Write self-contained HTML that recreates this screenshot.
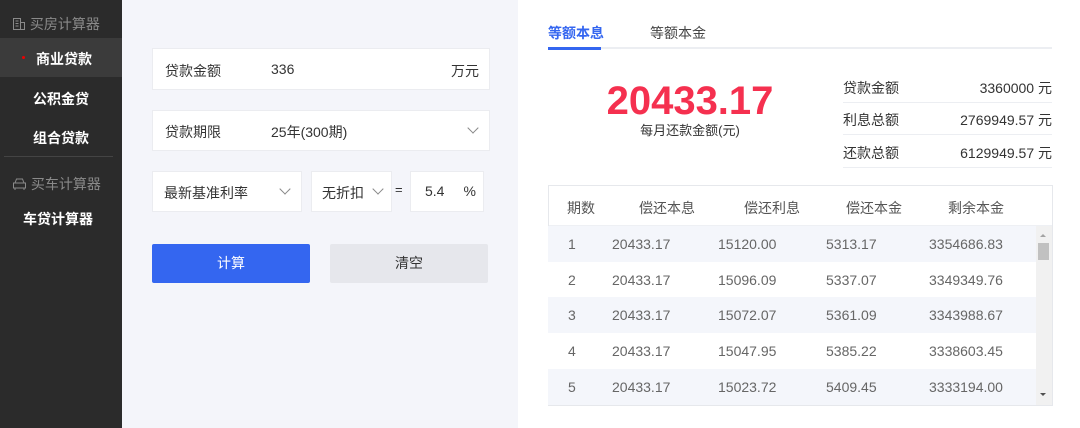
<!DOCTYPE html>
<html><head><meta charset="utf-8"><style>
*{margin:0;padding:0;box-sizing:border-box}
body{width:1080px;height:428px;overflow:hidden;position:relative;font-family:"Liberation Sans","Noto Sans CJK SC",sans-serif;background:#fff}
.a{position:absolute}
.sb{left:0;top:0;width:122px;height:428px;background:#2b2b2b}
.sb .t{position:absolute;width:122px;text-align:center;font-size:14px;color:#fff;font-weight:bold}
.sb .g{position:absolute;font-size:14px;color:#8a8a8a}
.lp{left:122px;top:0;width:396px;height:428px;background:#f4f5fa}
.box{position:absolute;background:#fff;border:1px solid #ebecf0;font-size:14px;color:#333}
.chev{position:absolute;width:8px;height:8px;border-right:1.3px solid #888;border-bottom:1.3px solid #888;transform:rotate(45deg)}
.txt{position:absolute;font-size:14px;color:#333;white-space:nowrap}
.row{position:absolute;left:548px;width:488px;height:36px;font-size:14px;color:#666}
.row span{position:absolute;top:10px}
</style></head><body>
<div class="a sb">
  <div class="g" style="left:12px;top:14px">
    <svg width="14" height="14" viewBox="0 0 14 14" style="vertical-align:-2px"><rect x="1.5" y="1.5" width="7" height="11" fill="none" stroke="#8a8a8a"/><rect x="8.5" y="5.5" width="4" height="7" fill="none" stroke="#8a8a8a"/><path d="M3.5 4h3M3.5 6.5h3M3.5 9h3" stroke="#8a8a8a"/></svg> 买房计算器</div>
  <div class="a" style="left:0;top:38px;width:122px;height:39px;background:#3b3b3b"></div>
  <div class="a" style="left:22px;top:56px;width:3px;height:3px;border-radius:50%;background:#e00"></div>
  <div class="t" style="top:49px;left:3px">商业贷款</div>
  <div class="t" style="top:89px">公积金贷</div>
  <div class="t" style="top:128px">组合贷款</div>
  <div class="a" style="left:4px;top:156px;width:109px;height:1px;background:#444"></div>
  <div class="g" style="left:12px;top:174px">
    <svg width="15" height="14" viewBox="0 0 15 14" style="vertical-align:-2px"><path d="M3 6 L4.5 2h6L12 6M1.5 6h12v5h-12zM3 11v2M12 11v2" fill="none" stroke="#8a8a8a"/></svg> 买车计算器</div>
  <div class="t" style="top:209px;left:-3px">车贷计算器</div>
</div>
<div class="a lp"></div>
<div class="box" style="left:152px;top:48px;width:338px;height:42px">
  <span class="txt" style="left:12px;top:12px">贷款金额</span><span class="txt" style="left:118px;top:12px">336</span><span class="txt" style="right:10px;top:12px">万元</span></div>
<div class="box" style="left:152px;top:110px;width:338px;height:41px">
  <span class="txt" style="left:12px;top:11px">贷款期限</span><span class="txt" style="left:118px;top:11px">25年(300期)</span><div class="chev" style="right:12px;top:13px"></div></div>
<div class="box" style="left:152px;top:171px;width:150px;height:41px">
  <span class="txt" style="left:11px;top:11px">最新基准利率</span><div class="chev" style="right:12px;top:13px"></div></div>
<div class="box" style="left:311px;top:171px;width:81px;height:41px">
  <span class="txt" style="left:10px;top:11px">无折扣</span><div class="chev" style="right:9px;top:13px"></div></div>
<span class="txt" style="left:395px;top:182px;font-size:13px">=</span>
<div class="box" style="left:410px;top:171px;width:74px;height:41px">
  <span class="txt" style="left:14px;top:11px">5.4</span><span class="txt" style="right:7px;top:11px">%</span></div>
<div class="a" style="left:152px;top:244px;width:158px;height:39px;background:#3466f0;border-radius:2px;color:#fff;font-size:14px;text-align:center;line-height:39px">计算</div>
<div class="a" style="left:330px;top:244px;width:158px;height:39px;background:#e6e7ec;border-radius:2px;color:#333;font-size:14px;text-align:center;line-height:39px">清空</div>

<span class="txt" style="left:548px;top:23px;color:#3466f0;font-weight:bold">等额本息</span>
<span class="txt" style="left:650px;top:23px;color:#444">等额本金</span>
<div class="a" style="left:548px;top:47px;width:504px;height:2px;background:#eceef2"></div>
<div class="a" style="left:548px;top:47px;width:53px;height:3px;background:#3466f0"></div>
<div class="a" style="left:590px;top:78px;width:200px;text-align:center;font-size:40px;font-weight:bold;color:#f5304f;line-height:46px">20433.17</div>
<div class="a" style="left:590px;top:120px;width:200px;text-align:center;font-size:13px;color:#333">每月还款金额(元)</div>

<span class="txt" style="left:843px;top:78px">贷款金额</span><span class="txt" style="right:28px;top:78px">3360000 元</span>
<div class="a" style="left:843px;top:102px;width:209px;height:1px;background:#eceef2"></div>
<span class="txt" style="left:843px;top:110px">利息总额</span><span class="txt" style="right:28px;top:110px">2769949.57 元</span>
<div class="a" style="left:843px;top:134px;width:209px;height:1px;background:#eceef2"></div>
<span class="txt" style="left:843px;top:143px">还款总额</span><span class="txt" style="right:28px;top:143px">6129949.57 元</span>
<div class="a" style="left:843px;top:167px;width:209px;height:1px;background:#eceef2"></div>

<div class="a" style="left:548px;top:185px;width:505px;height:221px;border:1px solid #e6e8ec"></div>
<div class="row" style="top:186px;height:39px;color:#555"><span style="left:19px;top:12px">期数</span><span style="left:91px;top:12px">偿还本息</span><span style="left:196px;top:12px">偿还利息</span><span style="left:298px;top:12px">偿还本金</span><span style="left:400px;top:12px">剩余本金</span></div>
<div class="a" style="left:549px;top:225px;width:503px;height:1px;background:#eef0f4"></div>
<div class="row" style="top:226px;background:#f4f6fb"><span style="left:20px">1</span><span style="left:64px">20433.17</span><span style="left:170px">15120.00</span><span style="left:278px">5313.17</span><span style="left:381px">3354686.83</span></div>
<div class="row" style="top:262px;background:#fff"><span style="left:20px">2</span><span style="left:64px">20433.17</span><span style="left:170px">15096.09</span><span style="left:278px">5337.07</span><span style="left:381px">3349349.76</span></div>
<div class="row" style="top:297px;background:#f4f6fb"><span style="left:20px">3</span><span style="left:64px">20433.17</span><span style="left:170px">15072.07</span><span style="left:278px">5361.09</span><span style="left:381px">3343988.67</span></div>
<div class="row" style="top:333px;background:#fff"><span style="left:20px">4</span><span style="left:64px">20433.17</span><span style="left:170px">15047.95</span><span style="left:278px">5385.22</span><span style="left:381px">3338603.45</span></div>
<div class="row" style="top:369px;background:#f4f6fb"><span style="left:20px">5</span><span style="left:64px">20433.17</span><span style="left:170px">15023.72</span><span style="left:278px">5409.45</span><span style="left:381px">3333194.00</span></div>
<div class="a" style="left:1036px;top:226px;width:16px;height:179px;background:#f1f1f1"></div>
<div class="a" style="left:1038px;top:243px;width:11px;height:17px;background:#c1c1c1"></div>
<div class="a" style="left:1040px;top:234px;border:3px solid transparent;border-bottom:3px solid #a3a3a3;border-top:none"></div>
<div class="a" style="left:1040px;top:393px;border:3px solid transparent;border-top:3px solid #505050;border-bottom:none"></div>
</body></html>
